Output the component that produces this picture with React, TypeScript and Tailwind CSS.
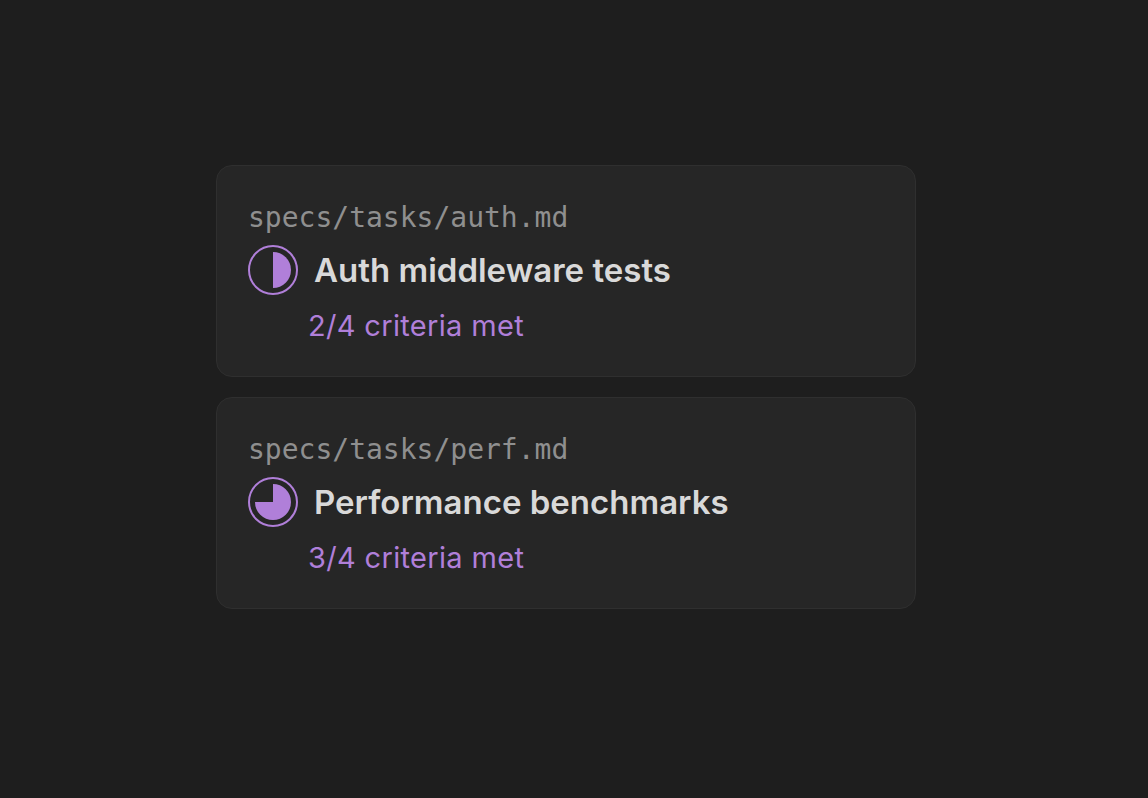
function Ring({ d }: { d: string }) {
  return (
    <svg width="50" height="50" viewBox="0 0 50 50" className="shrink-0">
      <circle cx="25" cy="25" r="24" fill="none" stroke="#b07fd9" strokeWidth="2" />
      <path d={d} fill="#b07fd9" />
    </svg>
  );
}

function Card({ path, title, met, d }: { path: string; title: string; met: string; d: string }) {
  return (
    <div className="flex h-[212px] w-[700px] flex-col rounded-[16px] border border-[#2f2f2f] bg-[#262626] pl-[31px] pt-[32px]">
      <div className="font-['DejaVu_Sans_Mono',monospace] text-[28px] leading-[40px] text-[#8f8f8f]">{path}</div>
      <div className="mt-[7px] flex items-center gap-[16px]">
        <Ring d={d} />
        <div className="font-['Inter',sans-serif] text-[33px] leading-[50px] font-semibold text-[#d9d9d9]">{title}</div>
      </div>
      <div className="mt-[11px] pl-[60px] font-['Inter',sans-serif] text-[29px] leading-[40px] tracking-[0.33px] text-[#b07fd9]">{met}</div>
    </div>
  );
}

export default function App() {
  return (
    <div className="flex h-[798px] w-[1148px] flex-col gap-5 bg-[#1e1e1e] pt-[165px] pl-[216px]">
      <Card path="specs/tasks/auth.md" title="Auth middleware tests" met="2/4 criteria met" d="M25 7 A18 18 0 0 1 25 43 Z" />
      <Card path="specs/tasks/perf.md" title="Performance benchmarks" met="3/4 criteria met" d="M25 7 A18 18 0 1 1 7 25 H25 Z" />
    </div>
  );
}
